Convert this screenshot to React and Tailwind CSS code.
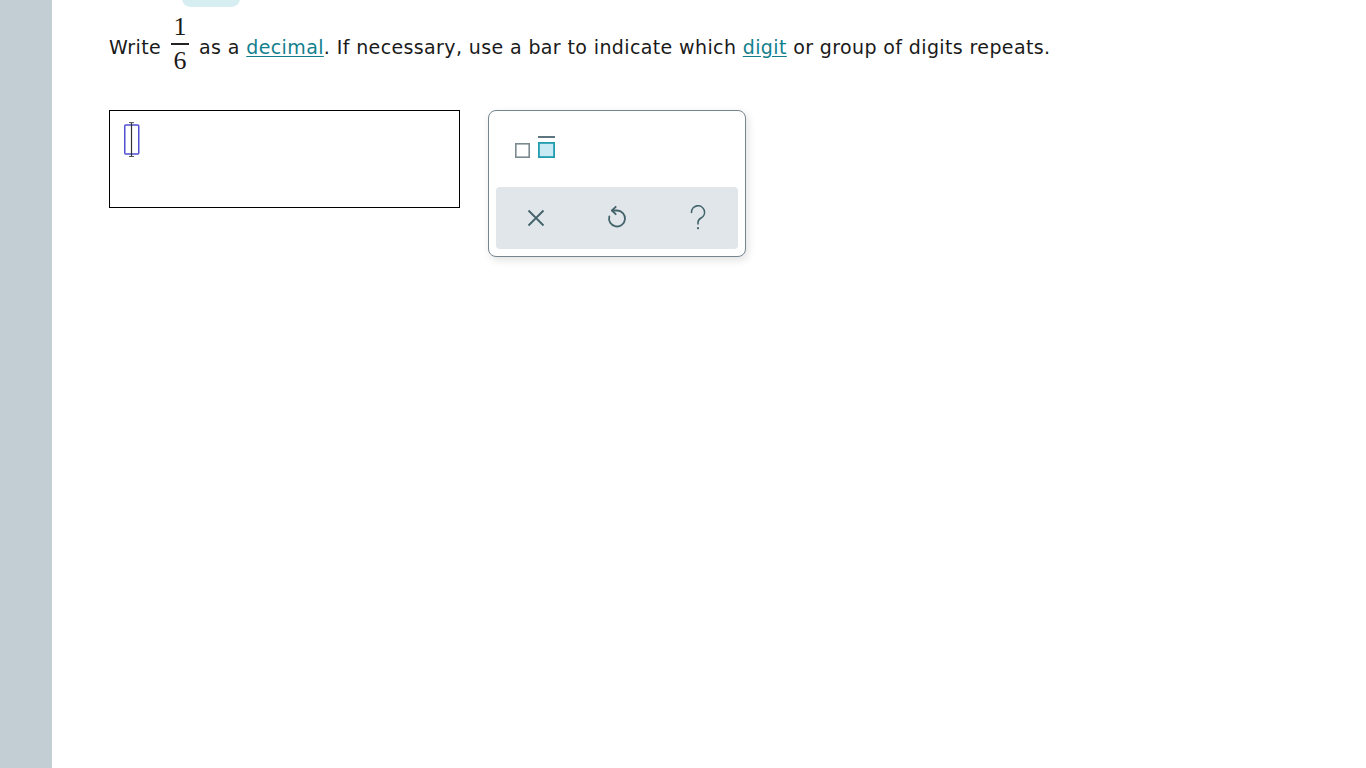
import React from "react";

export default function App() {
  const ic = "#43636b";
  return (
    <div className="flex min-h-[768px] w-full bg-white" style={{ fontFamily: '"DejaVu Sans", Verdana, sans-serif' }}>
      <div className="w-[52px] shrink-0 bg-[#c2ced3]" />
      <div className="relative flex-1 pl-[57px]">
        <div className="absolute left-[130px] top-[-10px] h-[17px] w-[58px] rounded-[9px] bg-[#d6eef2]" />
        <div className="flex items-start pt-[13px] text-[19px] text-[#1a1a1a]">
          <span className="mt-[22px] leading-[24px] tracking-[0.38px]">Write</span>
          <span className="mx-[10px] inline-flex flex-col items-center" style={{ fontFamily: '"Liberation Serif", "DejaVu Serif", serif' }}>
            <span className="px-[1px] pb-[2px] text-[26px] leading-[28px]">1</span>
            <span className="h-[1.5px] w-[18px] bg-[#222]" />
            <span className="px-[1px] pt-[2px] text-[26px] leading-[28px]">6</span>
          </span>
          <span className="mt-[22px] whitespace-pre leading-[24px] tracking-[0.38px]">
            as a <span className="text-[#137f8e] underline underline-offset-[2px]">decimal</span>. If necessary, use a bar to indicate which <span className="text-[#137f8e] underline underline-offset-[2px]">digit</span> or group of digits repeats.
          </span>
        </div>
        <div className="mt-[35px] flex items-start gap-[28px]">
          <div className="h-[98px] w-[351px] border border-black px-[14px] pt-[11px]">
            <svg width="16" height="36" viewBox="0 0 16 36" className="block">
              <rect x="0.75" y="3" width="14" height="29" rx="1" fill="none" stroke="#5050d0" strokeWidth="1.5" />
              <line x1="7.5" y1="1" x2="7.5" y2="34" stroke="#333" strokeWidth="1.2" />
              <line x1="5" y1="0.6" x2="10" y2="0.6" stroke="#555" strokeWidth="1" />
              <line x1="5" y1="34.5" x2="10" y2="34.5" stroke="#555" strokeWidth="1" />
            </svg>
          </div>
          <div className="w-[258px] rounded-[8px] border border-[#75868f] bg-white p-[7px] shadow-[2px_3px_8px_rgba(0,0,0,0.12)]">
            <div className="flex h-[69px] items-start gap-[8px] pl-[19px] pt-[18px]">
              <svg width="15" height="15" viewBox="0 0 15 15" className="mt-[7px] block">
                <rect x="0.8" y="0.8" width="13.4" height="13.4" fill="none" stroke="#7a8a90" strokeWidth="1.6" />
              </svg>
              <svg width="17" height="22" viewBox="0 0 17 22" className="block">
                <line x1="0" y1="1" x2="17" y2="1" stroke="#4e6770" strokeWidth="1.8" />
                <rect x="0.9" y="6.9" width="15.2" height="14.2" fill="#c8eaf5" stroke="#1f9cae" strokeWidth="1.8" />
              </svg>
            </div>
            <div className="grid h-[62px] grid-cols-3 items-center justify-items-center rounded-[4px] bg-[#e0e6e9]">
              <svg width="18" height="18" viewBox="0 0 18 18" className="block">
                <path d="M1.5 1.5 L16.5 16.5 M16.5 1.5 L1.5 16.5" stroke={ic} strokeWidth="1.8" fill="none" />
              </svg>
              <svg width="22" height="27" viewBox="0 0 22 27" className="block">
                <path d="M6 6.5 H11 A8 8 0 1 1 3.3 12.4" stroke={ic} strokeWidth="1.8" fill="none" strokeLinecap="round" />
                <path d="M9.7 2.8 L6 6.5 L9.7 10.2" stroke={ic} strokeWidth="1.8" fill="none" strokeLinecap="round" strokeLinejoin="round" />
              </svg>
              <svg width="16" height="26" viewBox="0 0 16 26" className="block">
                <path d="M1.5 7.5 A6.5 6.5 0 1 1 11 13 C8.8 14.3 8 15.3 8 17.5 V19" stroke={ic} strokeWidth="1.6" fill="none" strokeLinecap="round" />
                <circle cx="8" cy="23.2" r="1.1" fill={ic} />
              </svg>
            </div>
          </div>
        </div>
      </div>
    </div>
  );
}
